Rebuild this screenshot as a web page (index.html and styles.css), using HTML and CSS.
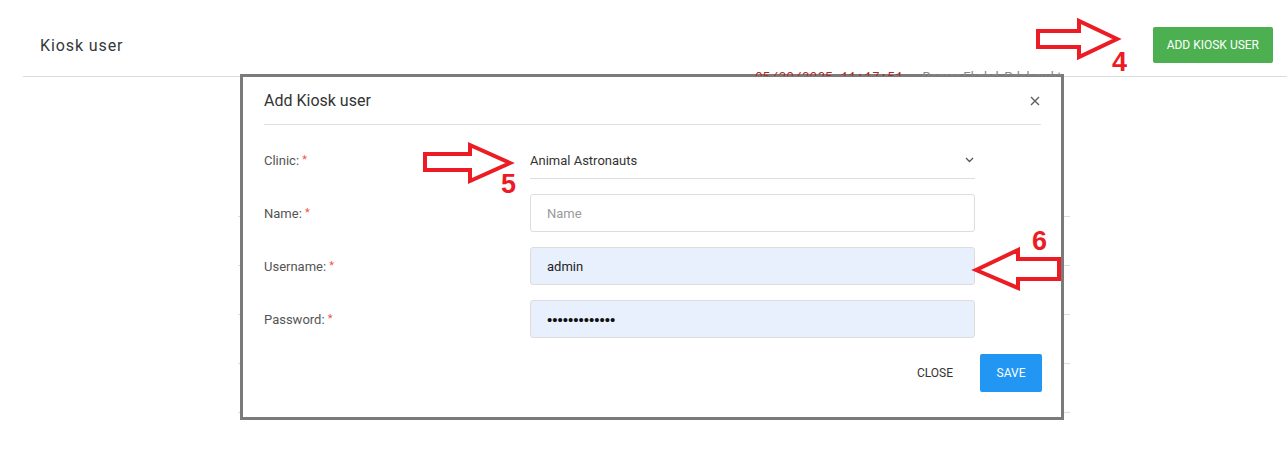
FILE: index.html
```html
<!DOCTYPE html>
<html lang="en">
<head>
  <meta charset="UTF-8" />
  <meta name="viewport" content="width=device-width, initial-scale=1.0"/>
  <title>Kiosk user</title>
  <link rel="stylesheet" href="styles.css">
</head>
<body>
  <div class="topbar">
    <h1 class="page-title">Kiosk user</h1>
    <button class="btn-add">ADD KIOSK USER</button>
  </div>

  <!-- table behind the dialog, only its edges show -->
  <div class="table-peek">
    <div class="peek-row"></div>
    <div class="peek-row"></div>
    <div class="peek-row"></div>
    <div class="peek-row"></div>
    <div class="peek-row"></div>
  </div>

  <div class="modal">
    <div class="modal-head">
      <h2>Add Kiosk user</h2>
      <button class="btn-x" aria-label="close">
        <svg width="10" height="10" viewBox="0 0 10 10"><path d="M1 1L9 9M9 1L1 9" stroke="#5f5f5f" stroke-width="1.4" fill="none"/></svg>
      </button>
    </div>

    <form class="modal-body">
      <label class="form-label">Clinic: <span class="req">*</span></label>
      <div class="select">
        <span>Animal Astronauts</span>
        <svg width="9" height="6" viewBox="0 0 9 6"><path d="M1 1L4.5 4.5L8 1" stroke="#555" stroke-width="1.3" fill="none"/></svg>
      </div>

      <label class="form-label">Name: <span class="req">*</span></label>
      <input class="field" type="text" placeholder="Name">

      <label class="form-label">Username: <span class="req">*</span></label>
      <input class="field filled" type="text" value="admin">

      <label class="form-label">Password: <span class="req">*</span></label>
      <input class="field filled pass" type="password" value="kioskadmin123">
    </form>

    <div class="modal-foot">
      <button class="btn-close">CLOSE</button>
      <button class="btn-save">SAVE</button>
    </div>
  </div>

  <!-- last row of the table, peeking over the dialog's top edge -->
  <div class="peek-text">
    <span class="peek-date">05/20/2025 11:17:51</span>
    <span class="peek-token">Bearer Ekchd, Pdsbnwkt</span>
  </div>

  <!-- red callout arrows drawn over the screenshot -->
  <svg class="callouts" width="1287" height="454" viewBox="0 0 1287 454">
    <g fill="none" stroke="#ed1c24" stroke-width="4" stroke-linejoin="miter">
      <polygon points="1038,31 1079,31 1079,21 1117,39 1079,57 1079,47 1038,47"/>
      <polygon points="425,154 470,154 470,145 510,163 470,181 470,170 425,170"/>
      <polygon points="976,270 1018,250 1018,259 1059,259 1059,279 1018,279 1018,288"/>
    </g>
    <g class="callout-num" fill="#ed1c24">
      <text x="1112" y="71">4</text>
      <text x="501" y="193">5</text>
      <text x="1032" y="250">6</text>
    </g>
  </svg>
</body>
</html>
```

FILE: styles.css
```css
body {
  font-family: Roboto, "Noto Sans", sans-serif;
  background-color: #fff;
  margin: 0;
  padding: 0;
  color: #333;
}

.topbar {
  display: flex;
  justify-content: space-between;
  align-items: flex-start;
  margin-left: 23px;
  padding: 27px 14px 0 17px;
  box-sizing: border-box;
  height: 77px;
  border-bottom: 1px solid #dcdcdc;
}

.page-title {
  margin: 9px 0 0;
  font-size: 16px;
  font-weight: 400;
  letter-spacing: 0.9px;
  line-height: 20px;
  color: #34383c;
}

.btn-add {
  height: 36px;
  padding: 0 14px;
  border: none;
  border-radius: 2px;
  background-color: #4caf50;
  color: #fff;
  font-family: Roboto, sans-serif;
  font-size: 12px;
  cursor: pointer;
}

.table-peek {
  width: 832px;
  margin: 139px 0 0 238px;
}

.peek-row {
  height: 48px;
  border-top: 1px solid #dcdcdc;
}

.peek-text {
  position: absolute;
  left: 755px;
  top: 70px;
  height: 6px;
  overflow: hidden;
  white-space: nowrap;
  font-size: 13px;
  line-height: 13px;
}

.peek-text span {
  display: inline-block;
  margin-top: -6px;
}

.peek-date {
  color: #b3261e;
  font-family: "Liberation Mono", monospace;
  margin-right: 16px;
}

.peek-token {
  color: #888;
}

.modal {
  position: absolute;
  left: 240px;
  top: 74px;
  width: 818px;
  border: 3px solid #7b7b7b;
  background-color: #fff;
}

.modal-head {
  display: flex;
  justify-content: space-between;
  align-items: center;
  margin: 0 20px 0 21px;
  padding: 14px 0 13px;
  border-bottom: 1px solid #e0e0e0;
}

.modal-head h2 {
  margin: 0;
  font-size: 16px;
  font-weight: 400;
  line-height: 20px;
  color: #333;
}

.btn-x {
  display: flex;
  padding: 0 1px;
  border: none;
  background: none;
  cursor: pointer;
}

.modal-body {
  display: grid;
  grid-template-columns: 266px 445px;
  row-gap: 15px;
  align-items: center;
  margin: 0;
  padding: 17px 20px 0 21px;
}

.form-label {
  font-size: 13px;
  color: #555;
}

.req {
  color: #f0524a;
  font-size: 11px;
  vertical-align: 2px;
}

.select {
  display: flex;
  justify-content: space-between;
  align-items: center;
  height: 36px;
  padding-right: 1px;
  border-bottom: 1px solid #ddd;
  font-size: 13px;
  color: #333;
}

.field {
  height: 38px;
  box-sizing: border-box;
  padding: 0 16px;
  border: 1px solid #ddd;
  border-radius: 3px;
  font-family: Roboto, sans-serif;
  font-size: 13px;
  color: #222;
  outline: none;
}

.field::placeholder {
  color: #9a9a9a;
}

.field.filled {
  background-color: #e8f0fe;
}

.field.pass {
  font-family: "Liberation Sans", Arial, sans-serif;
  font-size: 15px;
  color: #111;
}

.modal-foot {
  display: flex;
  justify-content: flex-end;
  align-items: center;
  gap: 11px;
  padding: 16px 19px 25px;
}

.btn-close {
  height: 38px;
  padding: 0 16px;
  border: none;
  background: none;
  font-family: Roboto, sans-serif;
  font-size: 12px;
  color: #333;
  cursor: pointer;
}

.btn-save {
  width: 62px;
  height: 38px;
  border: none;
  border-radius: 2px;
  background-color: #2196f3;
  color: #fff;
  font-family: Roboto, sans-serif;
  font-size: 12px;
  cursor: pointer;
}

.callouts {
  position: absolute;
  left: 0;
  top: 0;
  pointer-events: none;
}

.callout-num text {
  font-family: "Liberation Sans", Arial, sans-serif;
  font-weight: 700;
  font-size: 27px;
}
```
